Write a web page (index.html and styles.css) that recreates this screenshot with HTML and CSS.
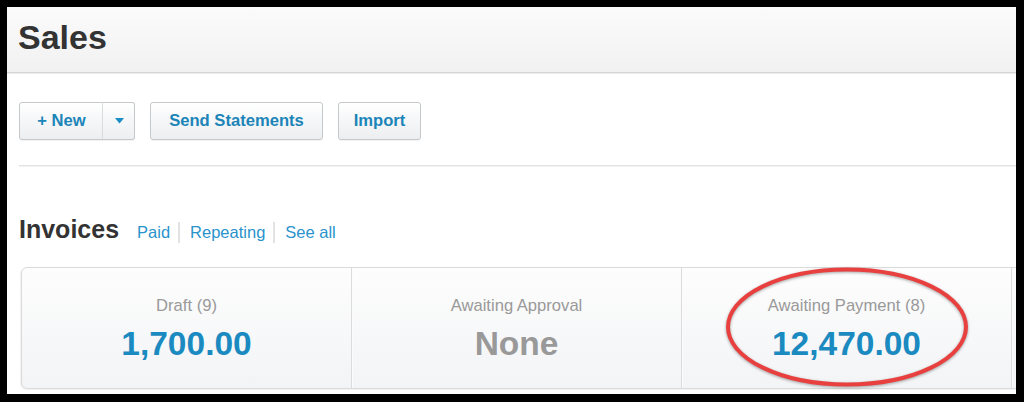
FILE: index.html
```html
<!DOCTYPE html>
<html>
<head>
<meta charset="utf-8">
<link rel="stylesheet" href="styles.css">
</head>
<body>
<div class="frame">
  <header class="page-header">
    <h1 class="title">Sales</h1>
  </header>
  <div class="toolbar">
    <div class="btn-split">
      <button class="btn btn-main">+ New</button>
      <button class="btn btn-caret"><svg width="9" height="6" viewBox="0 0 9 6"><path d="M0 0H9L4.5 5.5Z" fill="#1b8cc4"/></svg></button>
    </div>
    <button class="btn btn-send">Send Statements</button>
    <button class="btn btn-import">Import</button>
  </div>
  <div class="rule"></div>
  <div class="section-head">
    <h2 class="section-title">Invoices</h2>
    <nav class="links">
      <a class="link">Paid</a>
      <a class="link">Repeating</a>
      <a class="link">See all</a>
    </nav>
  </div>
  <div class="cards">
    <div class="card">
      <div class="card-label">Draft (9)</div>
      <div class="card-value">1,700.00</div>
    </div>
    <div class="card">
      <div class="card-label">Awaiting Approval</div>
      <div class="card-value none">None</div>
    </div>
    <div class="card">
      <div class="card-label">Awaiting Payment (8)</div>
      <div class="card-value">12,470.00</div>
    </div>
    <div class="card"></div>
    <svg class="annotation" width="260" height="134" viewBox="0 0 260 134">
      <ellipse cx="130" cy="65" rx="119" ry="57.5" fill="none" stroke="#e8403f" stroke-width="4"/>
    </svg>
  </div>
</div>
</body>
</html>
```
FILE: styles.css
```css
html, body {
  margin: 0;
  padding: 0;
  background: #000;
  height: 402px;
  overflow: hidden;
}
body {
  font-family: "Liberation Sans", Arial, sans-serif;
  padding: 7px 8px 8px 7px;
  box-sizing: border-box;
}
.frame {
  background: #fff;
  width: 1009px;
  height: 387px;
  overflow: hidden;
  position: relative;
}
.page-header {
  height: 65px;
  background: linear-gradient(#fbfbfb, #f1f1f1);
  border-bottom: 1px solid #d3d5d7;
  box-shadow: 0 1px 0 #ececec;
  padding-left: 11px;
}
.title {
  margin: 0;
  font-size: 34px;
  line-height: 61px;
  font-weight: bold;
  color: #333;
}
.toolbar {
  display: flex;
  gap: 15px;
  margin-top: 29px;
  padding-left: 12px;
  height: 38px;
}
.btn-split {
  display: flex;
}
.btn {
  height: 38px;
  box-sizing: border-box;
  border: 1px solid #c6c9cc;
  border-radius: 3px;
  background: linear-gradient(#ffffff, #eceef0);
  box-shadow: 0 1px 1px rgba(0,0,0,0.06);
  font-family: "Liberation Sans", Arial, sans-serif;
  font-weight: bold;
  font-size: 16.6px;
  color: #1b85b8;
  padding: 0;
  margin: 0;
  text-align: center;
}
.btn-main {
  width: 84px;
  border-radius: 3px 0 0 3px;
  padding: 0 0 0 1px;
}
.btn-caret {
  width: 33px;
  border-left: 1px solid #dadcde;
  border-radius: 0 3px 3px 0;
  margin-left: -1px;
  display: flex;
  align-items: center;
  justify-content: center;
}
.btn-caret svg {
  margin-left: 2px;
}
.btn-send {
  width: 173px;
}
.btn-import {
  width: 83px;
}
.rule {
  margin-top: 25px;
  margin-left: 12px;
  height: 1px;
  background: #e3e3e3;
  box-shadow: 0 1px 0 #f3f3f3;
}
.section-head {
  display: flex;
  align-items: baseline;
  margin-top: 48px;
  padding-left: 12px;
  height: 30px;
}
.section-title {
  margin: 0;
  font-size: 25px;
  line-height: 30px;
  font-weight: bold;
  color: #333;
}
.links {
  display: flex;
  margin-left: 18px;
}
.link {
  font-size: 16.5px;
  color: #2a93cc;
  padding: 0 8px 0 0;
  margin-right: 10px;
  border-right: 2px solid #e2e2e2;
  line-height: 21px;
}
.link:last-child {
  border-right: none;
  margin-right: 0;
}
.cards {
  position: relative;
  display: flex;
  margin-top: 23px;
  margin-left: 14px;
  width: 1400px;
  height: 122px;
  box-sizing: border-box;
  border: 1px solid #dadada;
  border-radius: 6px 0 0 6px;
  background: linear-gradient(#fdfdfd, #f3f4f6);
  box-shadow: -1px 1px 1px rgba(0,0,0,0.05);
}
.card {
  flex: 0 0 330px;
  box-sizing: border-box;
  border-right: 1px solid #dcdcdc;
  box-shadow: 1px 0 0 #fbfbfb;
  text-align: center;
  padding-top: 28px;
}
.card-label {
  font-size: 16.6px;
  line-height: 20px;
  color: #999;
}
.card-value {
  margin-top: 9px;
  font-size: 33.5px;
  line-height: 38px;
  font-weight: bold;
  color: #1a8ac0;
}
.card-value.none {
  color: #999;
}
.annotation {
  position: absolute;
  left: 695px;
  top: -6px;
  filter: drop-shadow(0 1px 1.5px rgba(0,0,0,0.35));
}
```
